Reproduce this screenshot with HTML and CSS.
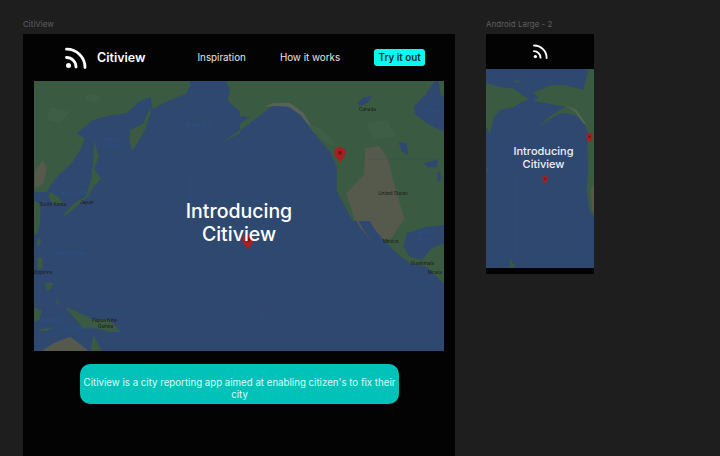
FILE: index.html
```html
<!DOCTYPE html>
<html>
<head>
    <title>CitiView</title>
    <link rel="stylesheet" href="styles.css">
</head>
<body>

<svg class="defs" width="0" height="0">
    <symbol id="rss" viewBox="0 0 22 22">
        <circle cx="3.5" cy="18.5" r="2.5" fill="#fff"/>
        <path d="M1.5 10.5A9.5 9.5 0 0 1 11 20M1.5 2.2A18.3 18.3 0 0 1 20 20.6" fill="none" stroke="#fff" stroke-width="2.8" stroke-linecap="round"/>
    </symbol>
    <symbol id="pin" viewBox="0 0 12 16">
        <path d="M6 16C4.500 12 .3 9.500 .3 5.700A5.700 5.700 0 0 1 11.700 5.700C11.700 9.500 7.500 12 6 16Z" fill="#a81f1f"/>
        <circle cx="6" cy="5.700" r="2" fill="#701414"/>
    </symbol>
</svg>

<div class="frame-col">
    <div class="frame-label">CitiView</div>
    <div class="frame desktop">
        <div class="nav">
            <svg class="nav-icon"><use href="#rss"/></svg>
            <span class="brand">Citiview</span>
            <a class="nav-link first">Inspiration</a>
            <a class="nav-link second">How it works</a>
            <a class="try-btn">Try it out</a>
        </div>
        <div class="map">
            <svg class="map-img" viewBox="0 0 1230 810" preserveAspectRatio="none">
                <rect width="1230" height="810" fill="#2f4870"/>
                <!-- top left -->
                <g transform="translate(-12,-3)">
                    <path class="land" d="M12 3H478L482 12 470 40 400 70 368 88 362 50 340 60 325 66 290 100 240 106 190 120 140 160 165 176 150 210 125 250 90 282 65 310 50 336 12 336Z"/>
                    <path class="land" d="M360 84L340 130 300 150 298 180 306 212 322 190 345 150 362 100Z"/>
                    <path class="land" d="M192 180L206 230 192 268 214 296 190 320 176 348 132 386 100 412 108 394 130 372 165 350 178 320 186 280 190 230Z"/>
                    <path class="land" d="M12 362L32 372 30 423 12 423ZM60 336L85 350 100 372 70 372 55 350Z"/>
                    <path class="land" d="M588 3L600 30 592 60 630 96 630 3ZM630 150L600 170 572 190 630 160Z"/>
                    <path class="tan" d="M15 270L40 240 50 270 40 310 15 325Z"/>
                    <path class="patch" d="M170 40L215 50 200 70 165 60ZM60 80L120 95 90 130 50 120Z"/>
                    <path class="border" d="M530 30L470 90 410 185 478 235 486 400"/>
                    <text class="water-label" x="225" y="182">Sea of</text>
                    <text class="water-label" x="220" y="200">Okhotsk</text>
                    <text class="water-label" x="468" y="140">Bering Sea</text>
                    <text class="water-label" x="90" y="342">Sea of Japan</text>
                    <text class="place-label" x="28" y="379">South Korea</text>
                    <text class="place-label" x="150" y="372">Japan</text>
                </g>
                <!-- top right -->
                <g transform="translate(618,-3)">
                    <path class="land" d="M0 3H584L560 40 522 80 525 102 560 130 612 155V423H338L320 390 290 332 290 260 270 215 230 170 190 100 150 72 100 76 60 106 0 152 0 132 28 112 0 108Z"/>
                    <path class="land" d="M595 3H612V50H604Z"/>
                    <path class="tan" d="M375 205L418 198 445 240 465 320 495 423 345 423 318 340 372 285Z"/>
                    <path class="ice" d="M70 80L100 70 150 68 190 98 232 165 220 155 182 105 145 80 100 78Z"/>
                    <path class="patch" d="M200 130L250 150 290 200 260 190 225 160ZM380 130L440 120 470 170 400 180Z"/>
                    <path class="water-in" d="M350 70L372 52 398 48 380 70 362 78ZM475 185L500 190 505 225 485 215ZM550 250L595 238 590 262 565 262ZM590 280L600 272 604 300 594 305Z"/>
                    <path class="border" d="M370 238H612"/>
                    <text class="place-label" x="357" y="92">Canada</text>
                    <text class="place-label" x="415" y="344">United States</text>
                    <text class="water-label" x="552" y="98">Hudson</text>
                </g>
                <!-- bottom left -->
                <g transform="translate(-12,417)">
                    <path class="land" d="M12 3H32L22 40 12 45ZM24 55L34 60 26 80 20 72ZM22 110L36 115 38 145 22 148ZM45 190L70 188 62 208 50 210ZM12 262L35 272 28 300 12 305Z"/>
                    <path class="land" d="M105 262L130 270 185 296 240 300 272 336 240 336 200 325 160 326 130 290Z"/>
                    <path class="land" d="M78 240L88 245 82 256ZM20 330L70 322 48 334ZM190 345L215 393 182 393Z"/>
                    <path class="tan" d="M36 393L70 370 120 350 150 372 176 393Z"/>
                    <path class="border" d="M486 0V250M12 255H630"/>
                    <text class="water-label" x="72" y="106">Philippine Sea</text>
                    <text class="water-label" x="35" y="305">Banda Sea</text>
                    <text class="water-label" x="108" y="329">Arafura Sea</text>
                    <text class="place-label" x="12" y="162">ilippines</text>
                    <text class="place-label" x="186" y="307">Papua New</text>
                    <text class="place-label" x="204" y="325">Guinea</text>
                </g>
                <!-- bottom right -->
                <g transform="translate(618,417)">
                    <path class="land" d="M385 -5H612V15L560 20 500 40 490 80 510 110 545 120 575 85 612 70V190L600 180 560 140 510 130 470 100 430 60Z"/>
                    <path class="tan" d="M350 -5L372 32 400 70 385 52 362 25 345 -5ZM385 -5H495L470 30 455 55 430 58 405 30Z"/>
                    <path class="border" d="M0 255H612M0 215L60 255 75 320 95 345M0 320H75"/>
                    <text class="place-label" x="428" y="69">Mexico</text>
                    <text class="place-label" x="512" y="134">Guatemala</text>
                    <text class="place-label" x="563" y="162">Nicara</text>
                    <text class="water-label" x="535" y="43">Gulf of</text>
                    <text class="water-label" x="530" y="62">Mexico</text>
                </g>
            </svg>
            <svg class="pin pin-north"><use href="#pin"/></svg>
            <svg class="pin pin-ocean"><use href="#pin"/></svg>
            <h1 class="hero-title">Introducing<br>Citiview</h1>
        </div>
        <div class="about">Citiview is a city reporting app aimed at enabling citizen's to fix their city</div>
    </div>
</div>

<div class="frame-col">
    <div class="frame-label">Android Large - 2</div>
    <div class="frame phone">
        <div class="phone-nav">
            <svg class="phone-icon"><use href="#rss"/></svg>
        </div>
        <div class="phone-map">
            <svg class="map-img" viewBox="48 177 324 597" preserveAspectRatio="none">
                <rect x="48" y="177" width="324" height="597" fill="#2f4870"/>
                <path class="land" d="M48 218L90 232 130 235 176 268 150 280 130 292 90 300 72 322 60 372 48 350Z"/>
                <path class="land" d="M190 248L240 226 285 226 340 240 356 178 372 178V370L356 372 345 345 320 318 285 308 260 315 205 352 240 318 285 290 240 282 192 272 205 262Z"/>
                <path class="land" d="M130 212L150 212 145 220ZM48 470L54 476 50 490Z"/>
                <path class="land" d="M352 378L372 360V620L358 600 350 540 354 480Z"/>
                <path class="tan" d="M362 540L372 520V610L366 600Z"/>
                <path class="land" d="M120 745L135 770 118 774Z"/>
                <path class="ice" d="M285 285L320 300 350 345 340 340 315 305Z"/>
                <path class="border" d="M138 480V774M138 603H372"/>
            </svg>
            <svg class="pin pin-edge"><use href="#pin"/></svg>
            <svg class="pin pin-middle"><use href="#pin"/></svg>
            <h2 class="phone-title">Introducing<br>Citiview</h2>
        </div>
    </div>
</div>

</body>
</html>
```

FILE: styles.css
```css
body {
    margin: 0;
    height: 456px;
    overflow: hidden;
    display: flex;
    gap: 31px;
    padding-left: 23px;
    background-color: #1e1e1e;
    font-family: 'Inter', 'Liberation Sans', sans-serif;
}
.defs {
    position: absolute;
}
.frame-col {
    display: flex;
    flex-direction: column;
}
.frame-label {
    flex-shrink: 0;
    height: 14px;
    padding-top: 20px;
    font-size: 8px;
    line-height: 8px;
    color: #5e5e5e;
}
.frame {
    background-color: #030303;
}
.desktop {
    width: 432px;
    height: 422px;
}
.phone {
    width: 108px;
    height: 240px;
    display: flex;
    flex-direction: column;
}

/* nav */
.nav {
    height: 47px;
    padding-left: 41px;
    display: flex;
    align-items: center;
    color: #fff;
}
.nav-icon {
    width: 22px;
    height: 22px;
    flex-shrink: 0;
    margin-left: 1px;
}
.brand {
    margin-left: 10px;
    font-size: 12.500px;
    font-weight: 600;
}
.nav-link {
    font-size: 9.800px;
    color: #e6e6e6;
}
.first {
    margin-left: 52px;
}
.second {
    margin-left: 34px;
}
.try-btn {
    margin-left: 34px;
    width: 51px;
    height: 17px;
    border-radius: 3px;
    background-color: #00fff0;
    color: #062b2a;
    font-size: 9.800px;
    font-weight: 600;
    line-height: 17px;
    text-align: center;
}

/* map */
.map {
    position: relative;
    height: 270px;
    margin: 0 11px;
}
.map-img {
    display: block;
    width: 100%;
    height: 100%;
    filter: blur(0.6px);
}
.land {
    fill: #3a5a42;
}
.tan {
    fill: #555a4c;
}
.ice {
    fill: #566359;
}
.patch {
    fill: #3e5e45;
}
.water-in {
    fill: #2f4870;
}
.border {
    fill: none;
    stroke: #4a4a6a;
    stroke-width: 1;
}
.water-label {
    font-size: 14px;
    fill: #2a5288;
}
.place-label {
    font-size: 14px;
    fill: #1c1c18;
}
.pin {
    position: absolute;
}
.pin-north {
    left: 300px;
    top: 66px;
    width: 12px;
    height: 16px;
}
.pin-ocean {
    left: 208px;
    top: 153px;
    width: 12px;
    height: 16px;
}
.hero-title {
    position: absolute;
    left: 0;
    right: 0;
    top: 119px;
    margin: 0;
    color: #fff;
    font-size: 19.500px;
    font-weight: 500;
    line-height: 23px;
    text-align: center;
}

.about {
    width: 319px;
    height: 40px;
    margin: 13px 0 0 57px;
    padding: 13px 2px 0;
    box-sizing: border-box;
    border-radius: 10px;
    background-color: #00c2b8;
    color: #dcfff9;
    font-size: 9.700px;
    line-height: 12px;
    text-align: center;
}

/* android frame */
.phone-nav {
    height: 35px;
    display: flex;
    align-items: center;
    justify-content: center;
}
.phone-icon {
    width: 15px;
    height: 15px;
}
.phone-map {
    position: relative;
    height: 199px;
    overflow: hidden;
}
.pin-edge {
    left: 100px;
    top: 64px;
    width: 7px;
    height: 10px;
}
.pin-middle {
    left: 56px;
    top: 106px;
    width: 6px;
    height: 10px;
}
.phone-title {
    position: absolute;
    left: 7px;
    right: 0;
    top: 76px;
    margin: 0;
    color: #eef1f5;
    font-size: 11px;
    font-weight: 500;
    line-height: 13px;
    text-align: center;
}
```
